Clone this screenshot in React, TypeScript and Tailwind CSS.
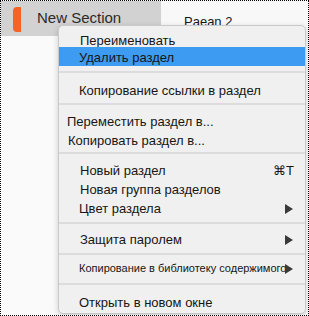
import React from 'react';

type Item = {
  label: string;
  pl: string;
  before: string; // spacer above the row
  h: string;
  pt?: string;
  size?: string;
  active?: boolean;
  shortcut?: string;
  submenu?: boolean;
};

const Arrow = () => (
  <svg width="8" height="10" viewBox="0 0 8 10" className="absolute right-[12px] top-1/2 -translate-y-1/2">
    <path d="M0 0 L8 5 L0 10 Z" fill="#3a3a3a" />
  </svg>
);

const Separator = ({ mt }: { mt: string }) => <div className={`${mt} h-[2px] bg-[#dcdcdc]`} />;

const groups: Item[][] = [
  [
    { label: 'Переименовать', pl: 'pl-[21px]', before: 'mt-[6px]', h: 'h-[15px]', pt: 'pt-[3px]' },
    { label: 'Удалить раздел', pl: 'pl-[20px]', before: 'mt-0', h: 'h-[19px]', pt: 'pt-[3px]', active: true },
  ],
  [{ label: 'Копирование ссылки в раздел', pl: 'pl-[20px]', before: 'mt-0', h: 'h-[30px]', pt: 'pt-[5px]' }],
  [
    { label: 'Переместить раздел в...', pl: 'pl-[8px]', before: 'mt-[7px]', h: 'h-[19px]' },
    { label: 'Копировать раздел в...', pl: 'pl-[9px]', before: 'mt-0', h: 'h-[19px]' },
  ],
  [
    { label: 'Новый раздел', pl: 'pl-[21px]', before: 'mt-[7px]', h: 'h-[19px]', shortcut: '⌘T' },
    { label: 'Новая группа разделов', pl: 'pl-[21px]', before: 'mt-0', h: 'h-[19px]' },
    { label: 'Цвет раздела', pl: 'pl-[20px]', before: 'mt-0', h: 'h-[19px]', submenu: true },
  ],
  [{ label: 'Защита паролем', pl: 'pl-[21px]', before: 'mt-[6px]', h: 'h-[19px]', submenu: true }],
  [
    {
      label: 'Копирование в библиотеку содержимого',
      pl: 'pl-[20px]',
      before: 'mt-[4px]',
      h: 'h-[19px]',
      size: 'text-[11px]',
      submenu: true,
    },
  ],
  [{ label: 'Открыть в новом окне', pl: 'pl-[20px]', before: 'mt-[8px]', h: 'h-[19px]' }],
];

const sepMargins = ['mt-[5px]', 'mt-0', 'mt-[2px]', 'mt-[4px]', 'mt-[4px]', 'mt-[5px]'];

export default function App() {
  return (
    <div
      className="relative w-[309px] h-[316px] overflow-hidden border border-dotted border-black bg-[#fafafa] text-[#161616]"
      style={{ fontFamily: '"Liberation Sans", Arial, sans-serif' }}
    >
      {/* section tabs */}
      <div className="flex h-[35px]">
        <div className="flex w-[160px] items-center bg-[#d2d2d2]">
          <div className="ml-[12px] mt-[1px] h-[25px] w-[8px] rounded-l-[4px] bg-[#f26522]" />
          <span className="ml-[16px] text-[15px] text-[#2b2b2b]">New Section</span>
        </div>
        <div className="flex flex-1 items-center bg-[#f8f8f8] pl-[23px] pt-[6px]">
          <span className="text-[13px]">Paean 2</span>
        </div>
      </div>

      {/* context menu */}
      <div className="absolute left-[57px] top-[24px] w-[248px] h-[289px] rounded-[5px] border border-[#c9c9c9] bg-[#f0f0f0] shadow-[0_2px_6px_rgba(0,0,0,0.18)]">
        {groups.map((group, gi) => (
          <React.Fragment key={gi}>
            {gi > 0 && <Separator mt={sepMargins[gi - 1]} />}
            {group.map((item) => (
              <div
                key={item.label}
                className={`${item.before} ${item.h} ${item.pt ?? ''} ${item.pl} relative flex items-center whitespace-nowrap ${
                  item.size ?? 'text-[13px]'
                } ${item.active ? 'bg-[#3d9bf2]' : ''}`}
              >
                {item.label}
                {item.shortcut && <span className="absolute right-[11px] text-[13px]">{item.shortcut}</span>}
                {item.submenu && <Arrow />}
              </div>
            ))}
          </React.Fragment>
        ))}
      </div>
    </div>
  );
}
